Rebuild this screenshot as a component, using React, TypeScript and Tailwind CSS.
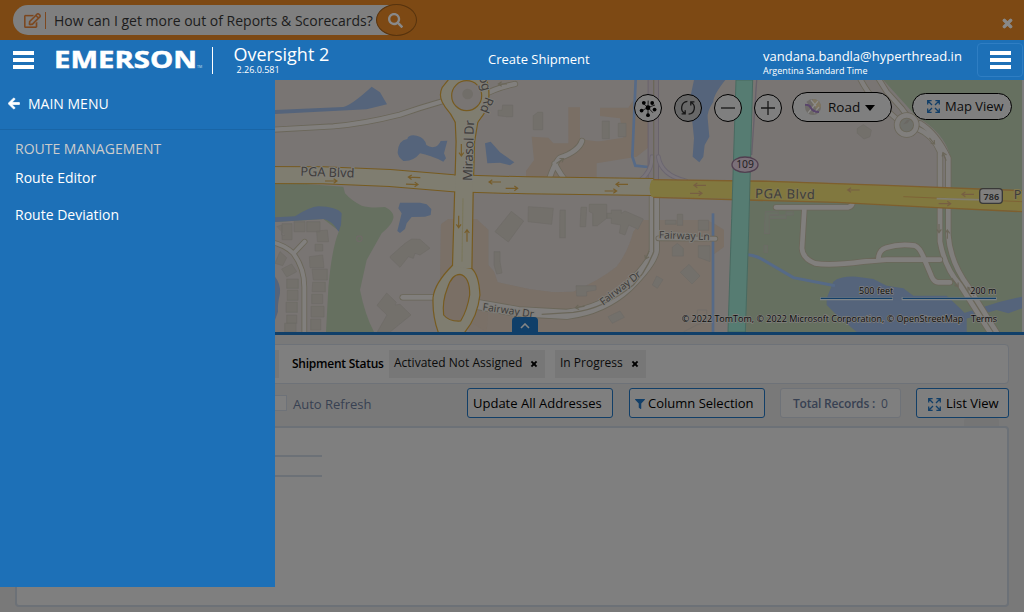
import React from "react";
import { FaArrowLeft, FaFilter, FaRegEdit, FaSearch, FaTimes } from "react-icons/fa";

const casing = "#6b675a";

function Bars({ className = "" }: { className?: string }) {
  return (
    <span className={`flex w-[21px] flex-col gap-[3px] ${className}`}>
      <span className="h-[4px] bg-white" />
      <span className="h-[4px] bg-white" />
      <span className="h-[4px] bg-white" />
    </span>
  );
}

function ExpandIcon() {
  return (
    <svg viewBox="0 0 13 13" className="h-[13px] w-[13px] shrink-0" fill="none" stroke="#123f68" strokeWidth="1.3">
      <path d="M.7 4.6V.7H4.6M8.4 .7h3.9V4.6M12.3 8.4v3.9H8.4M4.6 12.3H.7V8.4M1 1l4 4M12 1L8 5M12 12L8 8M1 12l4-4" />
    </svg>
  );
}

function Road({ d, w, fill = "#817f7d", edge = casing }: { d: string; w: number; fill?: string; edge?: string }) {
  return (
    <g fill="none" strokeLinecap="round" strokeLinejoin="round">
      <path d={d} stroke={edge} strokeWidth={w + 5} />
      <path d={d} stroke={fill} strokeWidth={w} />
    </g>
  );
}

function Arrow({ x, y, r = 0, color = "#775d2a", len = 36 }: { x: number; y: number; r?: number; color?: string; len?: number }) {
  return (
    <path
      transform={`translate(${x} ${y}) rotate(${r})`}
      d={`M${-len / 2} 0H${len / 2}M${len / 2 - 10} -7L${len / 2} 0L${len / 2 - 10} 7`}
      fill="none"
      stroke={color}
      strokeWidth="3.5"
    />
  );
}

const stem = "M527 92L557 130L560 200L556 340L549 580H604L608 340L612 200L622 140L652 92Z";
const northCircle = "M518 80Q508 60 518 38L545 5H640Q662 30 652 92Q640 120 622 140H557Q545 115 527 95Z";
const southLoop = "M549 572Q496 625 491 667Q488 730 512 785H570Q620 735 628 660Q625 600 604 582Z";
const boulevard = "M-810 296L160 301L360 309L550 325L770 331L1150 336";

function MapCanvas() {
  return (
    <svg viewBox="-810 15 3072 756" className="block h-[252px] w-[1024px]">
      <rect x="-810" y="15" width="3072" height="756" fill="#797573" />
      {/* Developed ground */}
      <g fill="#7a6f65">
        <path d="M513 448L535 432H620L655 465V570L672 590L683 622L780 643L850 652L910 650Q990 615 1040 575Q1075 530 1090 470L1120 435H1310L1330 445L1362 465V515L1328 540V771H600L510 640Z" opacity=".7" />
        <path d="M513 448L535 432H620L655 465V570L672 590L683 622L780 643L850 652L910 650Q990 615 1040 575Q1075 530 1090 470L1120 435H1135V530L1075 640L960 695L840 708L655 700L650 771L600 740L510 600Z" opacity=".6" />
        <path d="M1330 445L1362 465V515L1328 540Z" />
        <path d="M785 185L835 188L850 205L895 205V97H930V190Q965 203 1000 197L1060 188L1050 130L990 123V98H1075L1090 76H1138V215L1100 245L980 265V310H770L768 288L792 255Z" />
        <path d="M780 275L768 290V306H780Z" />
      </g>
      {/* Parkland */}
      <g fill="#667060">
        <path d="M15 320L220 335L225 355Q245 378 275 392Q300 400 345 396Q374 410 370 430Q366 450 335 475L290 555L270 645Q285 720 312 771H168L175 640Q185 520 207 468L160 432L15 441Z" />
        <path d="M1840 15H2256V345H2040V240Q2020 170 1940 125Z" />
        <path d="M1436 372L1700 378L2256 408V771H1425Z" />
      </g>
      {/* Water */}
      <g fill="#55647b">
        <path d="M15 105L220 96Q245 90 305 35L330 52L351 88L290 103L15 117Z" />
        <path d="M15 427L75 424Q120 395 145 394Q200 395 215 415L213 450L206 470Q185 435 160 432L15 441Z" />
        <path d="M383 232Q385 195 412 192Q415 178 440 182Q465 188 469 210Q480 218 492 216Q505 215 512 198L532 197L522 235L528 250L520 260Q480 240 450 235Q430 260 400 258Q383 245 383 232Z" />
        <path d="M645 205L662 200L690 232L733 262L720 271L690 263L652 265Z" />
        <path d="M390 383L450 383L470 388L484 402L482 420L465 425L425 426L410 445L405 462L390 474L382 468L395 415L385 400Z" />
        <path d="M15 605Q32 625 30 655Q22 690 24 710L15 735Z" />
        <path d="M1272 15H1366Q1330 60 1330 80Q1310 110 1313 130L1318 185L1304 210L1300 245L1288 262L1268 245L1272 190L1266 130L1258 80Z" />
        <path d="M1670 670L1690 620Q1710 603 1760 605L1810 612L1850 632L1900 640L1930 662L2030 662L2070 700L2090 720V771H1760L1700 720L1670 690Z" />
        <path d="M2080 715L2190 680L2256 665V700L2215 715L2180 705L2085 732Z" />
      </g>
      <g fill="none" stroke="#566a87">
        <path d="M1097 15L1087 245L1096 272L1134 276" strokeWidth="8" />
        <path d="M1329 415V771" strokeWidth="8" />
        <path d="M1433 539Q1455 540 1480 555L1570 608L1695 632" strokeWidth="9" />
      </g>
      {/* Buildings */}
      <g fill="#73706b" stroke="#6e6b66" strokeWidth="2">
        <path d="M724 409L761 438L715 501L675 470Z" />
        <path d="M360 545L405 505L425 492L450 493L480 520L450 540L435 535L430 550L415 545L390 577L362 550Z" />
        <path d="M350 654L379 682L375 690L390 688L423 720L360 771H322L351 720L321 691Z" />
        <path d="M672 530H690V560L696 594L680 597L672 570Z" />
        <path d="M698 90H728V125H710L684 122V106H696Z" />
        <circle cx="268" cy="491" r="8" fill="none" strokeWidth="4" />
        <path d="M20 455L35 450V480L45 482M36 446H66V494H36ZM72 440H105V470H72ZM110 440H150V470H110ZM140 468L172 465L176 500H142ZM135 508H158V528H135ZM118 545L158 540L162 578H120ZM30 530L50 548L38 572L15 565ZM35 582L65 567L80 590L50 606ZM126 582H172V615H130ZM50 612H85V640H50ZM128 622H166V650H126ZM52 646H84V676H52ZM125 658H158V686H125ZM48 682H82V712H48ZM123 694H162V726H123ZM50 720H80V745H50ZM122 732H152V765H122ZM44 745H78V771H44Z" />
        <path d="M790 122L803 112H818V164H790ZM997 138H1018V191H997ZM1045 145H1068V185H1045Z" />
        <path d="M775 395L850 400L845 448L774 440ZM870 405H886V488H869V460ZM933 397H950L947 455H930ZM958 388H1010V430L982 452H968V415L958 410ZM1010 415H1024V405H1054V415L1065 408L1120 432L1104 463L1076 450L1065 480L1048 474L1052 450L1024 445V430H1010ZM1186 436H1218V448H1186ZM1222 418H1238V451H1222ZM1285 436H1316V466H1285ZM1207 517L1222 505L1240 520V543H1207ZM1285 512H1320V560L1285 547ZM1257 568L1290 603L1266 627L1231 592ZM1160 603L1179 614L1162 640L1147 630ZM918 632H978V645L950 650V663H920ZM1014 725L1050 708L1063 727L1027 745Z" />
        <path d="M1282 735V705H1310V740L1280 750L1240 771" fill="none" />
        <path d="M1762 160L1780 149L1804 165L1800 185L1782 192L1762 175Z" />
        <path d="M1486 410H1525V420H1498V476H1483ZM1482 511H1493V533H1482ZM1500 420H1570V410H1548V431H1500" fill="#697064" />
      </g>
      {/* Local roads */}
      <Road d="M10 164L190 154Q280 147 390 119Q450 98 520 78" w={13} />
      <Road d="M630 66Q675 39 735 27" w={14} />
      <Road d="M0 500Q45 510 70 535Q104 580 103 640V780M72 534L104 500" w={12} />
      <Road d="M398 667H500" w={14} />
      <Road d="M835 320Q855 260 870 248Q925 230 936 198M854 266Q875 305 890 320" w={14} />
      <Road d="M620 688L745 710L890 718Q1000 705 1075 635Q1150 560 1153 525V350" w={28} />
      <Road d="M1165 490L1336 491" w={12} />
      <Road d="M1150 340V15" w={29} fill="#777174" edge="#67616b" />
      <Road d="M1146 245Q1146 290 1107 319M1165 245Q1172 300 1248 318" w={9} fill="#79747a" edge="#6b6670" />
      <path d="M1151 15V530Q1140 560 1118 595L1090 630Q1000 702 910 712L815 718" fill="none" stroke={casing} strokeWidth="4" />
      <Road d="M1770 10Q1790 50 1815 75L1895 145M1825 10L1850 50L1895 100L1910 120" w={13} />
      <Road d="M1940 160Q1990 180 2010 230V500Q2025 580 2070 630L2165 780M1950 145Q2000 175 2035 250V480Q2040 560 2095 635L2185 780" w={14} />
      <circle cx="1910" cy="150" r="29" fill="#6f706b" stroke={casing} strokeWidth="19" />
      <circle cx="1910" cy="150" r="29" fill="none" stroke="#817f7d" strokeWidth="14" />
      <path d="M1900 148L1910 136L1922 132L1912 145Z" fill="#6b6863" />
      <Road d="M1518 397H1735Q1747 394 1748 380M1603 404L1596 520Q1597 550 1635 565Q1680 573 1780 560L1850 554H2010M1825 552Q1826 525 1848 518Q1890 505 1935 512Q1950 517 1964 555L1985 605Q1993 622 2005 622H2040" w={14} />
      {/* Mirasol Drive and PGA Boulevard: outlines first, surfaces above */}
      <g fill="#775b20" stroke="#775b20" strokeWidth="7" strokeLinejoin="round">
        <path d={stem} /><path d={northCircle} /><path d={southLoop} />
      </g>
      <path d={boulevard} fill="none" stroke="#775b20" strokeWidth="54" />
      <path d={boulevard} fill="none" stroke="#7f7d70" strokeWidth="48" />
      <g fill="#7f7d70">
        <path d={stem} /><path d={northCircle} /><path d={southLoop} />
      </g>
      <circle cx="590" cy="62" r="45" fill="#797573" stroke="#775b20" strokeWidth="3.5" />
      <circle cx="593" cy="57" r="16" fill="#716e69" />
      <path d="M570 598Q545 598 532 640Q516 680 521 720Q537 740 572 738Q592 705 599 660Q600 605 570 598Z" fill="#7a6f65" stroke="#775b20" strokeWidth="3.5" />
      <path d="M579 370L576 560" stroke="#77724f" strokeWidth="2" />
      <path d="M1145 315L1500 317L1850 331L2256 349V408L2000 398L1700 382L1400 372L1145 366Q1132 340 1145 315Z" fill="#81783f" />
      <path d="M1150 314L1500 319L1850 331L2256 347M1150 367L1500 377L1700 382L2000 398L2256 410" stroke="#7e5f2e" strokeWidth="4" fill="none" />
      <path d="M1900 365L2256 380" stroke="#7e6336" strokeWidth="3" fill="none" />
      <path d="M2000 371L2190 376" stroke="#817f70" strokeWidth="5" />
      <path d="M1460 15L1445 240" stroke="#67616b" strokeWidth="4" />
      <path d="M1398 15H1448L1436 470L1426 771H1374L1385 430Z" fill="#567c72" stroke="#496a61" strokeWidth="3" />
      {/* Direction arrows */}
      <Arrow x={183} y={318} /><Arrow x={433} y={307} r={182} /><Arrow x={426} y={328} r={2} /><Arrow x={675} y={321} r={180} /><Arrow x={725} y={340} />
      <Arrow x={574} y={225} r={90} /><Arrow x={566} y={440} r={90} /><Arrow x={591} y={482} r={270} />
      <Arrow x={1056} y={328} r={180} /><Arrow x={1022} y={348} />
      <Arrow x={1290} y={331} r={180} color="#775f43" /><Arrow x={1278} y={355} color="#775f43" />
      <Arrow x={1751} y={345} r={180} color="#775f43" /><Arrow x={2094} y={358} r={180} color="#775f43" /><Arrow x={2024} y={386} color="#775f43" />
      <Arrow x={2007} y={460} r={90} color={casing} len={26} /><Arrow x={2032} y={478} r={270} color={casing} len={26} />
      <Arrow x={1986} y={198} r={50} color={casing} len={24} /><Arrow x={2024} y={245} r={250} color={casing} len={26} />
      <Arrow x={2055} y={622} r={53} color={casing} len={32} /><Arrow x={2103} y={650} r={235} color={casing} len={32} />
      <Arrow x={930} y={696} r={170} color={casing} len={28} /><Arrow x={1132} y={540} r={115} color={casing} len={26} />
      <Arrow x={698} y={27} r={180} color={casing} len={26} /><Arrow x={870} y={258} r={-35} color={casing} len={26} />
      {/* Labels */}
      <g fontFamily="'Noto Sans', 'Open Sans', sans-serif" fill="#3f3e3c" stroke="#7f7d78" strokeWidth="6" paintOrder="stroke">
        <text transform="translate(91 302) rotate(2)" fontSize="38" textLength="162">PGA Blvd</text>
        <text transform="translate(606 318) rotate(-88)" fontSize="39" textLength="182">Mirasol Dr</text>
        <text transform="translate(647 64) rotate(112)" fontSize="38">Rd</text>
        <text transform="translate(627 5) rotate(76)" fontSize="38">og</text>
        <text transform="translate(637 706) rotate(8)" fontSize="31" textLength="155">Fairway Dr</text>
        <text transform="translate(1166 490) rotate(2)" fontSize="31" textLength="153">Fairway Ln</text>
        <text transform="translate(1000 692) rotate(-38)" fontSize="31" textLength="146">Fairway Dr</text>
        <text transform="translate(1455 369) rotate(1)" fontSize="39" textLength="179" stroke="#82794f">PGA Blvd</text>
        <text x="2231" y="373" fontSize="38" stroke="#82794f">P</text>
      </g>
      <ellipse cx="1425" cy="269" rx="39" ry="23" fill="#7b7079" stroke="#513f50" strokeWidth="4" />
      <text x="1425" y="280" textAnchor="middle" fontFamily="'Noto Sans', sans-serif" fontSize="31" fill="#242224">109</text>
      <rect x="2129" y="341" width="68" height="44" rx="10" fill="#807f7e" stroke="#393938" strokeWidth="4" />
      <text x="2164" y="374" textAnchor="middle" fontFamily="'Noto Sans', sans-serif" fontWeight="600" fontSize="27" fill="#242424">786</text>
      {/* Scale and attribution */}
      <g fill="#0b0b0b" stroke="#817f7d" strokeWidth="4" paintOrder="stroke" fontFamily="'Open Sans', sans-serif" fontSize="27">
        <text x="1767" y="656" textLength="103">500 feet</text>
        <text x="2101" y="656" textLength="78">200 m</text>
        <text x="1235" y="740" textLength="845">© 2022 TomTom, © 2022 Microsoft Corporation, © OpenStreetMap</text>
        <text x="2103" y="740" textLength="78">Terms</text>
      </g>
      <path d="M1650 671H1869M1895 671H2180" stroke="#7f8589" strokeWidth="9" />
      <path d="M1652 670H1867M1898 670H2178" stroke="#123f68" strokeWidth="4" />
      <rect x="2256" y="15" width="6" height="756" fill="#7c7c7c" />
    </svg>
  );
}

function RoundButton({ children, dim = false }: { children: React.ReactNode; dim?: boolean }) {
  return (
    <span className={`flex h-[28px] w-[28px] items-center justify-center rounded-full border border-black ${dim ? "bg-[#686868]" : "bg-[#7f7f7f]"}`}>
      <svg viewBox="0 0 20 20" className="h-[20px] w-[20px]" fill="none" stroke="#171717" strokeWidth="1.3">{children}</svg>
    </span>
  );
}

function MapTools() {
  return (
    <div className="absolute top-[12px] right-[12px] flex items-start">
      <div className="mt-px flex gap-[12px] pt-px">
        <RoundButton>
          <path d="M10 9.5L10.2 2.6M10 9.5L17 7M10 9.5L15 14.8M10 9.5L10 17.6M10 9.5L3.6 12.8M10 9.5L4.4 4.8" strokeWidth=".9" />
          <g fill="#000" stroke="none"><circle cx="10" cy="9.7" r="2.4" /><circle cx="5.8" cy="4.8" r="1.9" /><circle cx="14.2" cy="5" r="1.9" /><circle cx="16.6" cy="11.6" r="1.9" /><circle cx="10" cy="17.2" r="1.9" /><circle cx="3.6" cy="12.6" r="1.9" /></g>
        </RoundButton>
        <RoundButton dim>
          <path d="M7 15.4A6.4 6.4 0 0 1 9.4 3.4M13 4.2A6.4 6.4 0 0 1 10.6 16.2M3.6 15.8H7.2V12.2M16.4 3.8H12.8V7.4" />
        </RoundButton>
        <RoundButton><path d="M3 10H17" /></RoundButton>
        <RoundButton><path d="M3 10H17M10 3V17" /></RoundButton>
      </div>
      <div className="ml-[10px] flex h-[30px] w-[100px] items-center rounded-full border border-black bg-[#7f7f7f] pl-[12px] text-[13.5px] text-[#0c0c0c]">
        <svg viewBox="0 0 16 16" className="mr-[7px] h-[16px] w-[16px]">
          <circle cx="8" cy="8" r="8" fill="#6e6b67" />
          <path d="M8 0A8 8 0 0 1 16 8L12 11L7 4Z" fill="#7e7560" />
          <path d="M3 14L13 2M1 4L8 10M6 1L11 7M9 14L14 8" stroke="#8c8b89" strokeWidth="1.2" />
          <path d="M0 6Q4 5 6 9T14 13" fill="none" stroke="#59456b" strokeWidth="2" />
        </svg>
        <span className="w-[32px]">Road</span>
        <svg viewBox="0 0 10 6" className="mt-px ml-[5px] h-[6px] w-[10px]"><path d="M0 0H10L5 6Z" fill="#000" /></svg>
      </div>
      <div className="mt-px ml-[20px] flex h-[27px] w-[100px] items-center gap-[5px] rounded-full border border-black bg-[#7f7f7f] pl-[14px] text-[13px] whitespace-nowrap text-[#0c0c0c]">
        <ExpandIcon />
        <span>Map View</span>
      </div>
    </div>
  );
}

function Chip({ label, className }: { label: string; className: string }) {
  return (
    <span className={`flex h-[28px] items-center justify-between bg-[#777777] pr-[7px] pl-[5px] text-[12px] text-[#0b0b0b] ${className}`}>
      <span className="-mt-[2px] whitespace-nowrap">{label}</span>
      <FaTimes className="h-[8px] w-[8px] text-black" stroke="currentColor" strokeWidth="40" />
    </span>
  );
}

export default function App() {
  return (
    <div className="relative flex h-[612px] w-[1024px] flex-col overflow-hidden bg-[#797979] font-['Open_Sans',sans-serif]">
      <div className="flex h-[40px] shrink-0 items-center justify-between bg-[#7d4914] pl-[13px]">
        <div className="flex items-center">
          <div className="flex h-[30px] w-[380px] items-center rounded-l-full bg-[#7f7f7f]">
            <FaRegEdit className="ml-[11px] h-[15px] w-[17px] text-[#7d4820]" stroke="currentColor" strokeWidth="8" />
            <span className="ml-[4px] h-[17px] w-px bg-[#7d4820]" />
            <span className="ml-[8px] text-[14px] whitespace-nowrap text-[#1c1c1c]">How can I get more out of Reports &amp; Scorecards?</span>
          </div>
          <span className="-ml-[17px] flex h-[32px] w-[41px] items-center justify-center rounded-[50%] border border-[#57330e] bg-[#7d4914]">
            <FaSearch className="-ml-[3px] h-[15px] w-[15px] text-[#898989]" />
          </span>
        </div>
        <FaTimes className="mt-[6px] mr-[10px] h-[13px] w-[13px] overflow-visible text-[#898989]" stroke="currentColor" strokeWidth="40" />
      </div>

      <header className="flex h-[40px] shrink-0 items-center bg-[#1d70b7] text-white">
        <Bars className="ml-[13px]" />
        <svg viewBox="0 0 150 36" className="ml-[20px] h-[36px] w-[150px] overflow-visible">
          <text x="0" y="25.5" fill="#fff" stroke="#fff" strokeWidth=".5" fontFamily="'Open Sans', sans-serif" fontWeight="700" fontSize="23.5" textLength="143" lengthAdjust="spacingAndGlyphs">EMERSON</text>
          <text x="143" y="25.5" fill="#cfe0f0" fontFamily="'Open Sans', sans-serif" fontSize="3.5">TM</text>
        </svg>
        <span className="ml-[8px] h-[27px] w-px bg-white" />
        <div className="mb-[2px] ml-[20.5px] w-[99.5px]">
          <div className="text-[18px] leading-[22px] whitespace-nowrap">Oversight 2</div>
          <div className="ml-[3px] text-[9px] leading-[10px]">2.26.0.581</div>
        </div>
        <div className="ml-[155px] w-[275px] text-[13px] whitespace-nowrap">Create Shipment</div>
        <div className="w-[214px] pt-[5px]">
          <div className="text-[13px] leading-[16px]">vandana.bandla@hyperthread.in</div>
          <div className="text-[9px] leading-[14px]">Argentina Standard Time</div>
        </div>
        <div className="flex h-[34px] w-[46px] items-center justify-center rounded-[4px] border border-[#2f7ec3]">
          <Bars />
        </div>
      </header>

      <section className="relative h-[255px] shrink-0 border-b-[3px] border-[#103f69]">
        <MapCanvas />
        <MapTools />
        <div className="absolute bottom-0 left-[512px] flex h-[15px] w-[26px] items-center justify-center rounded-t-[4px] bg-[#103f69]">
          <svg viewBox="0 0 10 6" className="mt-[3px] h-[6px] w-[10px]" fill="none" stroke="#858585" strokeWidth="1.6"><path d="M1 5L5 1L9 5" /></svg>
        </div>
      </section>

      <main className="flex flex-col px-[15px] pt-[9px]">
        <div className="flex h-[40px] w-[994px] items-center rounded-[4px] border border-[#6e7278] bg-[#7f7f7f]">
          <span className="h-[28px] w-[263px] bg-[#777777]" />
          <span className="ml-[13px] w-[97px] pb-px text-[12px] font-semibold tracking-[-0.25px] whitespace-nowrap text-black">Shipment Status</span>
          <Chip label="Activated Not Assigned" className="w-[156px]" />
          <Chip label="In Progress" className="ml-[10px] w-[91px]" />
        </div>
        <div className="mt-[4px] flex h-[30px] w-[994px] items-center text-[13px] whitespace-nowrap">
          <span className="ml-[256px] h-[16px] w-[16px] border border-[#6e7278] bg-[#7f7f7f]" />
          <span className="ml-[6px] w-[174px] pt-[4px] text-[#384152]">Auto Refresh</span>
          <div className="flex h-[30px] w-[146px] items-center rounded-[3px] border border-[#123f68] bg-[#7f7f7f] pt-[2px] pl-[5px] text-black">Update All Addresses</div>
          <div className="ml-[16px] flex h-[30px] w-[136px] items-center gap-[3px] rounded-[3px] border border-[#123f68] bg-[#7f7f7f] pt-[2px] pl-[5px] text-black">
            <FaFilter className="h-[10px] w-[10px] text-[#123f68]" />
            <span>Column Selection</span>
          </div>
          <div className="ml-[15px] flex h-[30px] w-[121px] items-center gap-[6px] rounded-[3px] border border-[#6e7278] bg-[#7f7f7f] pt-[2px] pl-[12px] text-[12px] text-[#384152]">
            <span className="font-semibold tracking-[-0.2px]">Total Records :</span>
            <span>0</span>
          </div>
          <div className="ml-[15px] flex h-[30px] w-[93px] items-center gap-[5px] rounded-[3px] border border-[#123f68] bg-[#7f7f7f] pt-[2px] pl-[11px] text-black">
            <ExpandIcon />
            <span>List View</span>
          </div>
        </div>
        <span className="mr-[10px] h-[8px] w-[35px] self-end rounded-t-[3px] bg-[#757575]" />
        <div className="h-[181px] w-[994px] rounded-[4px] border-2 border-[#6c7177] bg-[#7f7f7f] pt-[27px]">
          <div className="h-[22px] w-[305px] border-y-2 border-[#6c7177]" />
        </div>
      </main>

      <nav className="absolute top-[80px] left-0 h-[507px] w-[275px] bg-[#1d70b7] text-[14px] text-white">
        <div className="flex h-[50px] items-center gap-[8px] border-b border-[#1965a6] pb-[3px] pl-[8px]">
          <FaArrowLeft className="h-[13px] w-[12px]" stroke="currentColor" strokeWidth="30" />
          <span>MAIN MENU</span>
        </div>
        <div className="flex flex-col pl-[15px]">
          <span className="mt-[9px] leading-[20px] text-[#cccccc]">ROUTE MANAGEMENT</span>
          <span className="mt-[9px] leading-[20px]">Route Editor</span>
          <span className="mt-[17px] leading-[20px]">Route Deviation</span>
        </div>
      </nav>
    </div>
  );
}
